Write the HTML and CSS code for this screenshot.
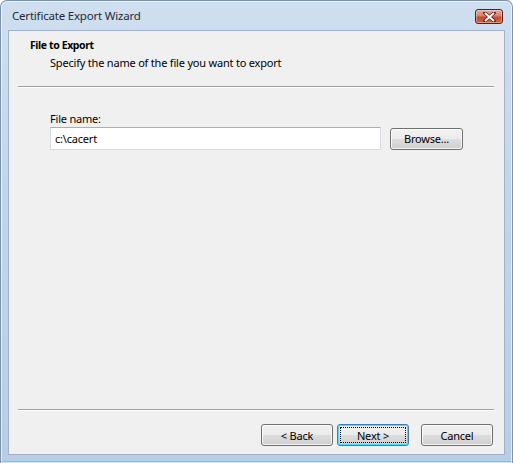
FILE: index.html
```html
<!DOCTYPE html>
<html lang="en">
<head>
  <meta charset="UTF-8" />
  <title>Certificate Export Wizard</title>
  <link rel="stylesheet" href="styles.css">
</head>
<body>

<div class="window">
    <div class="titlebar">
        <span class="title">Certificate Export Wizard</span>
        <button class="close-btn" title="Close">
            <svg width="13" height="10" viewBox="0 0 13 10">
                <path d="M2 1 L11 9 M11 1 L2 9" stroke="#6b1c12" stroke-width="3.4" stroke-linecap="square"/>
                <path d="M2 1 L11 9 M11 1 L2 9" stroke="#fff" stroke-width="2"/>
            </svg>
        </button>
    </div>

    <div class="client">
        <!-- wizard page header -->
        <div class="page-header">
            <div class="page-title">File to Export</div>
            <div class="page-subtitle">Specify the name of the file you want to export</div>
        </div>
        <div class="separator"></div>

        <div class="page-body">
            <label class="field-label" for="fileName">File name:</label>
            <div class="field-row">
                <input type="text" id="fileName" class="text-input" value="c:\cacert" />
                <button class="btn browse-btn">Browse...</button>
            </div>
        </div>

        <div class="separator"></div>
        <div class="footer">
            <button class="btn">&lt; Back</button>
            <button class="btn default">Next &gt;</button>
            <button class="btn cancel-btn">Cancel</button>
        </div>
    </div>
</div>

</body>
</html>
```

FILE: styles.css
```css
/* 對話框外框 */
body {
    margin: 0;
    background: #fff;
    font-family: "Noto Sans", "Open Sans", sans-serif;
    font-size: 11px;
    letter-spacing: -0.2px;
    color: #000;
}
.window {
    width: 513px;
    height: 463px;
    box-sizing: border-box;
    display: flex;
    flex-direction: column;
    background: linear-gradient(180deg, #cfdff0 0%, #c2d6eb 40%, #b8cee6 100%);
    border: 1px solid #7d93aa;
    border-bottom: none;
    border-radius: 7px 7px 0 0;
    box-shadow: inset 0 0 0 1px rgba(255, 255, 255, 0.6), inset 0 -2px 0 #5fd0f0;
    padding: 0 7px 8px 7px;
}
.titlebar {
    height: 29px;
    display: flex;
    align-items: center;
    justify-content: space-between;
    padding-left: 4px;
    padding-right: 2px;
}
.title {
    color: #1d2a3a;
    font-size: 11.5px;
}
.close-btn {
    width: 28px;
    height: 15px;
    margin-top: 2px;
    padding: 0;
    display: flex;
    align-items: center;
    justify-content: center;
    border: 1px solid #5a1e16;
    border-radius: 3px;
    background: linear-gradient(180deg, #e9a99a 0%, #d7826f 45%, #c04a30 55%, #cf6a4d 100%);
    box-shadow: inset 0 0 0 1px rgba(255, 255, 255, 0.35);
}

/* 內容區 */
.client {
    flex: 1;
    display: flex;
    flex-direction: column;
    background: #f0f0f0;
    border: 1px solid #9fb4ca;
}
.page-header {
    height: 55px;
    box-sizing: border-box;
    padding: 6px 0 0 21px;
}
.page-title {
    font-weight: bold;
    font-size: 10.5px;
    letter-spacing: -0.4px;
    line-height: 17px;
}
.page-subtitle {
    padding-left: 20px;
    line-height: 17px;
}
.separator {
    margin: 0 10px 0 9px;
    height: 1px;
    background: #a0a0a0;
    border-bottom: 1px solid #fff;
}
.page-body {
    flex: 1;
    padding: 22px 0 0 41px;
}
.field-label {
    display: block;
    line-height: 17px;
}
.field-row {
    display: flex;
    align-items: center;
    gap: 9px;
}
.text-input {
    width: 331px;
    height: 23px;
    box-sizing: border-box;
    border: 1px solid #d6dbe1;
    border-top-color: #abadb3;
    background: #fff;
    font: inherit;
    letter-spacing: inherit;
    padding: 0 4px;
    outline: none;
}

/* 按鈕 */
.btn {
    width: 72px;
    height: 22px;
    box-sizing: border-box;
    padding: 0;
    font: inherit;
    letter-spacing: inherit;
    color: #000;
    border: 1px solid #707070;
    border-radius: 3px;
    background: linear-gradient(180deg, #f2f2f2 0%, #ebebeb 48%, #dddddd 52%, #cfcfcf 100%);
    box-shadow: inset 0 0 0 1px rgba(255, 255, 255, 0.8);
}
.browse-btn {
    width: 73px;
}
.btn.default {
    border-color: #3c7fb1;
    box-shadow: inset 0 0 0 1px #48d8fb;
    outline: 1px dotted #000;
    outline-offset: -4px;
}
.footer {
    height: 43px;
    box-sizing: border-box;
    display: flex;
    justify-content: flex-end;
    gap: 4px;
    padding: 13px 11px 0 0;
}
.cancel-btn {
    margin-left: 8px;
}
```
